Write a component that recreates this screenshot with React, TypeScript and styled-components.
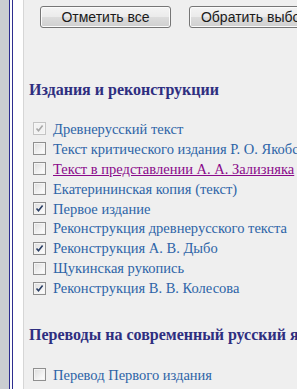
import { createGlobalStyle, styled } from "styled-components";

const editions = [
  { label: "Древнерусский текст", checked: true, disabled: true },
  { label: "Текст критического издания Р. О. Якобсона", checked: false },
  { label: "Текст в представлении А. А. Зализняка", checked: false, link: true },
  { label: "Екатерининская копия (текст)", checked: false },
  { label: "Первое издание", checked: true },
  { label: "Реконструкция древнерусского текста", checked: false },
  { label: "Реконструкция А. В. Дыбо", checked: true },
  { label: "Щукинская рукопись", checked: false },
  { label: "Реконструкция В. В. Колесова", checked: true },
];

const translations = [{ label: "Перевод Первого издания", checked: false }];

type Item = { label: string; checked: boolean; disabled?: boolean; link?: boolean };

const Check = ({ checked, disabled }: { checked: boolean; disabled?: boolean }) => (
  <SBox $disabled={disabled}>
    {checked && (
      <svg width="9" height="9" viewBox="0 0 9 9">
        <path
          d="M1.5 4.5 L3.5 6.8 L7.6 1.6"
          fill="none"
          stroke={disabled ? "#a8a8a8" : "#2a3f66"}
          strokeWidth="1.6"
        />
      </svg>
    )}
  </SBox>
);

const CheckList = ({ items, gapTop }: { items: Item[]; gapTop: number }) => (
  <SList $gapTop={gapTop}>
    {items.map((item) => (
      <SRow key={item.label}>
        <Check checked={item.checked} disabled={item.disabled} />
        <SLabel $link={item.link}>{item.label}</SLabel>
      </SRow>
    ))}
  </SList>
);

const App = () => {
  return (
    <>
      <GlobalStyle />
      <SPage>
        <SSideStrip />
        <SFrame>
          <SGutter />
          <SContent>
            <SButtonBar>
              <SButton>Отметить все</SButton>
              <SButton>Обратить выбор</SButton>
            </SButtonBar>
            <SHeading $gapTop={53}>Издания и реконструкции</SHeading>
            <CheckList items={editions} gapTop={20} />
            <SHeading $gapTop={28}>Переводы на современный русский язык</SHeading>
            <CheckList items={translations} gapTop={21} />
          </SContent>
        </SFrame>
      </SPage>
    </>
  );
};

const GlobalStyle = createGlobalStyle`
  html, body {
    margin: 0;
    padding: 0;
    overflow: hidden;
  }
  body {
    background: #efefef;
  }
`;

const SPage = styled.div`
  display: flex;
  width: 297px;
  height: 389px;
  overflow: hidden;
  background: #efefef;
`;

const SSideStrip = styled.div`
  width: 9px;
  flex-shrink: 0;
  background: #cacdd1;
`;

const SFrame = styled.div`
  display: flex;
  flex: 1;
  border-left: 4px double #2d2d8f;
  background: #fdfdfd;
`;

const SGutter = styled.div`
  width: 10px;
  flex-shrink: 0;
  background: #fefefe;
  border-right: 1px solid #d6d6d6;
`;

const SContent = styled.div`
  flex: 1;
  min-width: 0;
  padding: 6px 0 0 5px;
  background: #efefef;
  white-space: nowrap;
`;

const SButtonBar = styled.div`
  display: flex;
  gap: 18px;
  padding-left: 11px;
`;

const SButton = styled.button`
  flex-shrink: 0;
  width: 131px;
  height: 22px;
  padding: 0;
  border: 1px solid #767676;
  border-radius: 3px;
  background: linear-gradient(#f4f4f4 0%, #ebebeb 48%, #dcdcdc 52%, #cfcfcf 100%);
  font-family: "Liberation Sans", Arial, sans-serif;
  font-size: 14px;
  color: #1a1a1a;
  box-shadow: inset 0 0 0 1px #fbfbfb;
`;

const SHeading = styled.h2<{ $gapTop: number }>`
  margin: ${(p) => p.$gapTop}px 0 0 0;
  font-family: "Liberation Serif", "Times New Roman", serif;
  font-size: 16px;
  font-weight: 700;
  line-height: 18px;
  color: #2e2e80;
`;

const SList = styled.div<{ $gapTop: number }>`
  display: flex;
  flex-direction: column;
  margin-top: ${(p) => p.$gapTop}px;
  padding-left: 4px;
`;

const SRow = styled.div`
  display: flex;
  align-items: center;
  gap: 7px;
  height: 19.9px;
`;

const SBox = styled.span<{ $disabled?: boolean }>`
  display: flex;
  align-items: center;
  justify-content: center;
  width: 11px;
  height: 11px;
  flex-shrink: 0;
  border: 1px solid ${(p) => (p.$disabled ? "#c4c4c4" : "#8f8f8f")};
  background: ${(p) =>
    p.$disabled
      ? "#f2f2f2"
      : "linear-gradient(135deg, #dcdcdc 0%, #f2f2f2 60%, #ffffff 100%)"};
  box-shadow: inset 0 0 0 1px ${(p) => (p.$disabled ? "#f6f6f6" : "#f4f4f4")};
`;

const SLabel = styled.span<{ $link?: boolean }>`
  font-family: "Liberation Serif", "Times New Roman", serif;
  font-size: 14.5px;
  line-height: 20px;
  color: ${(p) => (p.$link ? "#8a0a8a" : "#2d64a7")};
  text-decoration: ${(p) => (p.$link ? "underline" : "none")};
`;

export default App;
